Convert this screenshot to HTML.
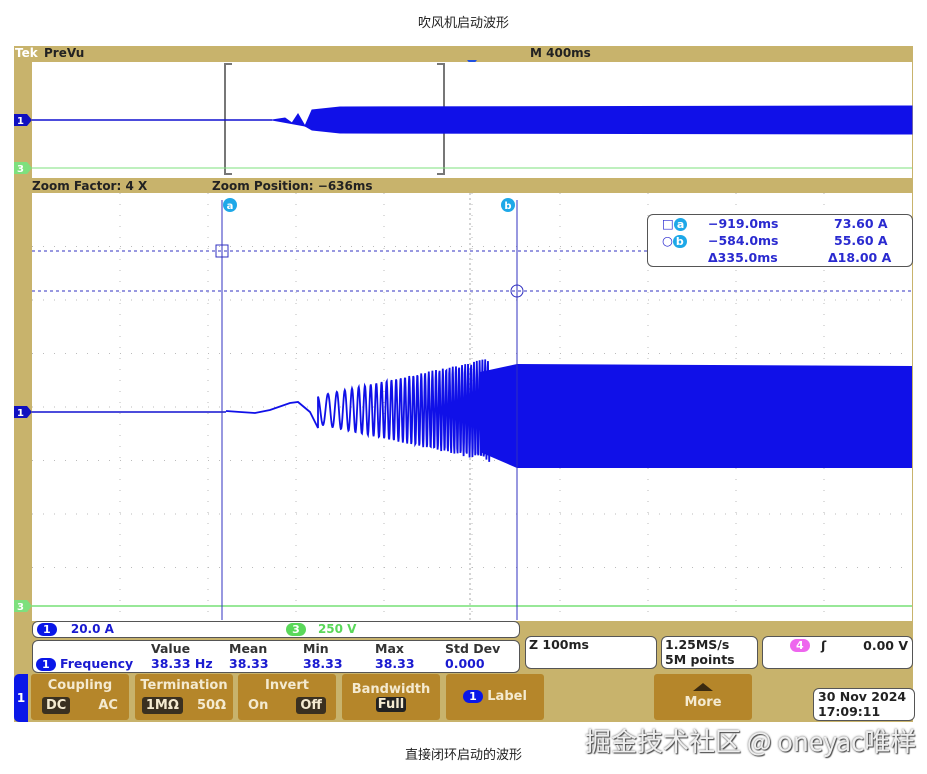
<!DOCTYPE html>
<html><head><meta charset="utf-8"><style>
body{margin:0;width:927px;height:774px;background:#fff;position:relative;overflow:hidden;font-family:"DejaVu Sans","Liberation Sans",sans-serif}
.abs{position:absolute}
.cap{position:absolute;font:13px "Liberation Sans","Noto Sans CJK SC",sans-serif;color:#222;width:927px;text-align:center}
.gold{background:#c8b36c}
.t{font-size:12px;font-weight:bold;color:#222;position:absolute;white-space:nowrap}
.box{position:absolute;background:#fff;border:1px solid #555;border-radius:6px}
.btn{position:absolute;top:674px;height:46px;background:#b5862a;border-radius:3px;color:#f4ead0;font-size:13px;font-weight:bold;text-align:center}
.sel{background:#3a3020;border-radius:3px;padding:1px 4px}
.blue{color:#1a1ad0}
.pill{display:inline-block;background:#0a17e8;color:#fff;border-radius:8px;padding:0 6px;font-size:11px;line-height:13px}
</style></head><body>
<div class="cap" style="top:12px">吹风机启动波形</div>
<div class="cap" style="top:744px">直接闭环启动的波形</div>
<div class="abs gold" style="left:14px;top:46px;width:899px;height:676px"></div>
<div class="t" style="left:15px;top:46px;color:#fff">Tek</div>
<div class="t" style="left:44px;top:46px">PreVu</div>
<div class="t" style="left:530px;top:46px">M 400ms</div>
<div class="abs" style="left:467px;top:60px;width:0;height:0;border:5px solid transparent;border-top:6px solid #2050e0"></div>
<div class="t" style="left:32px;top:179px">Zoom Factor: 4 X</div>
<div class="t" style="left:212px;top:179px">Zoom Position: −636ms</div>
<svg class="abs" style="left:0;top:0" width="927" height="774" id="sv">
<rect x="32" y="62" width="880" height="116" fill="#fff"/>
<rect x="32" y="193" width="880" height="428" fill="#fff"/>
<g id="grid"></g>
<path d="M232 64h-7v110h7M437 64h7v110h-7" fill="none" stroke="#777" stroke-width="2"/>
<line x1="32" y1="168" x2="912" y2="168" stroke="#7ee07e"/>
<line x1="32" y1="120" x2="272" y2="120" stroke="#1010d0" stroke-width="1.5"/>
<path id="top" fill="#1010e8" stroke="#1010e8"/>
<line x1="32" y1="606" x2="912" y2="606" stroke="#30d030"/>
<line x1="32" y1="412" x2="226" y2="412" stroke="#1010d0" stroke-width="1.5"/>
<path id="chirp" fill="none" stroke="#1010e8" stroke-width="1.8"/>
<path id="env" fill="#1010e8"/>
<line x1="222" y1="200" x2="222" y2="620" stroke="#3030c0"/>
<line x1="517" y1="200" x2="517" y2="620" stroke="#3030c0"/>
<line x1="32" y1="251" x2="912" y2="251" stroke="#3030c0" stroke-dasharray="3,3"/>
<line x1="32" y1="291" x2="912" y2="291" stroke="#3030c0" stroke-dasharray="3,3"/>
<rect x="216" y="245" width="12" height="12" fill="none" stroke="#3030c0"/>
<circle cx="517" cy="291" r="6" fill="none" stroke="#3030c0"/>
<circle cx="230" cy="205" r="7" fill="#1ea8e8"/><text x="230" y="209" fill="#fff" font-size="10" font-weight="bold" text-anchor="middle">a</text>
<circle cx="508" cy="205" r="7" fill="#1ea8e8"/><text x="508" y="209" fill="#fff" font-size="10" font-weight="bold" text-anchor="middle">b</text>
<path d="M14 114h13l5 6-5 6h-13z" fill="#1010c0"/><text x="17" y="124" fill="#fff" font-size="10" font-weight="bold">1</text>
<path d="M14 406h13l5 6-5 6h-13z" fill="#1010c0"/><text x="17" y="416" fill="#fff" font-size="10" font-weight="bold">1</text>
<path d="M14 162h13l5 6-5 6h-13z" fill="#7ee07e"/><text x="17" y="172" fill="#fff" font-size="10" font-weight="bold">3</text>
<path d="M14 600h13l5 6-5 6h-13z" fill="#7ee07e"/><text x="17" y="610" fill="#fff" font-size="10" font-weight="bold">3</text>
</svg>
<div class="box" style="left:647px;top:214px;width:264px;height:51px;font-size:12.5px;font-weight:bold;color:#2a2ad0;line-height:16px">
<div class="abs" style="left:14px;top:1px">□<span class="pill" style="background:#1ea8e8;padding:0 3px">a</span></div>
<div class="abs" style="left:14px;top:18px">○<span class="pill" style="background:#1ea8e8;padding:0 3px">b</span></div>
<div class="abs" style="left:60px;top:1px">−919.0ms</div><div class="abs" style="left:60px;top:18px">−584.0ms</div><div class="abs" style="left:60px;top:35px">Δ335.0ms</div>
<div class="abs" style="left:186px;top:1px">73.60 A</div><div class="abs" style="left:186px;top:18px">55.60 A</div><div class="abs" style="left:180px;top:35px">Δ18.00 A</div>
</div>
<div class="box" style="left:32px;top:621px;width:486px;height:15px;font-size:12px;font-weight:bold;line-height:15px">
<span class="pill" style="margin-left:4px">1</span> <span class="blue" style="margin-left:10px">20.0 A</span>
<span class="pill" style="background:#5ad85a;margin-left:168px">3</span> <span style="color:#5ad85a;margin-left:8px">250 V</span></div>
<div class="box" style="left:32px;top:640px;width:486px;height:31px;font-size:12.5px;font-weight:bold;color:#333">
<div class="abs" style="left:118px;top:0">Value</div><div class="abs" style="left:196px;top:0">Mean</div><div class="abs" style="left:270px;top:0">Min</div><div class="abs" style="left:342px;top:0">Max</div><div class="abs" style="left:412px;top:0">Std Dev</div>
<div class="abs blue" style="left:3px;top:15px"><span class="pill">1</span> Frequency</div>
<div class="abs blue" style="left:118px;top:15px">38.33 Hz</div><div class="abs blue" style="left:196px;top:15px">38.33</div><div class="abs blue" style="left:270px;top:15px">38.33</div><div class="abs blue" style="left:342px;top:15px">38.33</div><div class="abs blue" style="left:412px;top:15px">0.000</div></div>
<div class="box" style="left:525px;top:636px;width:127px;height:31px;font-size:12.5px;font-weight:bold;padding-left:3px;color:#222">Z 100ms</div>
<div class="box" style="left:661px;top:636px;width:92px;height:31px;font-size:12.5px;font-weight:bold;padding-left:3px;color:#222;line-height:15px">1.25MS/s<br>5M points</div>
<div class="box" style="left:762px;top:636px;width:149px;height:31px;font-size:12.5px;font-weight:bold;color:#222"><span class="pill" style="background:#ee66ee;position:absolute;left:27px;top:2px">4</span><span class="abs" style="left:58px;top:1px">ʃ</span><span class="abs" style="right:4px;top:1px">0.00 V</span></div>
<div class="abs" style="left:14px;top:674px;width:14px;height:48px;background:#0a17e8;border-radius:5px 0 0 5px;color:#fff;font-size:12px;font-weight:bold;text-align:center;line-height:48px">1</div>
<div class="btn" style="left:31px;width:98px"><div style="margin-top:4px">Coupling</div><div style="margin-top:5px"><span class="sel">DC</span><span style="margin-left:28px">AC</span></div></div>
<div class="btn" style="left:135px;width:98px"><div style="margin-top:4px">Termination</div><div style="margin-top:5px"><span class="sel">1MΩ</span><span style="margin-left:14px">50Ω</span></div></div>
<div class="btn" style="left:238px;width:98px"><div style="margin-top:4px">Invert</div><div style="margin-top:5px"><span>On</span><span class="sel" style="margin-left:28px">Off</span></div></div>
<div class="btn" style="left:342px;width:98px"><div style="margin-top:8px">Bandwidth</div><div><span class="sel" style="padding:0 2px;background:#222">Full</span></div></div>
<div class="btn" style="left:446px;width:98px;line-height:46px"><span class="pill">1</span> Label</div>
<div class="btn" style="left:654px;width:98px"><div style="width:0;height:0;margin:9px auto 0;border:10px solid transparent;border-bottom:8px solid #3a2a10;border-top:0"></div><div style="margin-top:4px">More</div></div>
<div class="box" style="left:813px;top:688px;width:96px;height:31px;font-size:12.5px;font-weight:bold;color:#222;padding-left:4px;line-height:15px">30 Nov 2024<br>17:09:11</div>
<div class="abs" style="left:585px;top:722px;font:26px 'Noto Sans CJK SC',sans-serif;color:#eee;text-shadow:0 0 2px #555,1px 1px 1px #444;white-space:nowrap">掘金技术社区 @ oneyac唯样</div>
<script>
var g='',i;
for(i=1;i<10;i++){var x=32+i*88;g+='<line x1="'+x+'" y1="193" x2="'+x+'" y2="621" stroke="#bbb" stroke-dasharray="1,10"/>';}
for(i=1;i<8;i++){var y=193+i*53.5;g+='<line x1="32" y1="'+y+'" x2="912" y2="'+y+'" stroke="#bbb" stroke-dasharray="1,10"/>';}
g+='<line x1="470" y1="193" x2="470" y2="621" stroke="#aaa" stroke-dasharray="2,3"/>';
document.getElementById('grid').innerHTML=g;
var d='M226 411 L240 412 L255 413 L270 410 L290 403 L298 402 L310 412 L318 428',ph=0,x;
for(x=318;x<=490;x+=0.4){var f=(x-318)/172;ph+=0.4*(0.55+f*1.8);var a=14+f*38;d+=' L'+x.toFixed(1)+' '+(410+a*Math.sin(ph-1.5)).toFixed(1);}
document.getElementById('chirp').setAttribute('d',d);
document.getElementById('env').setAttribute('d','M480 372 L517 364 L912 366 L912 468 L517 468 L480 452 Z');
var t='M272 120 L285 118 L292 123 L298 114 L305 126 L312 110 L340 107 L912 106 L912 134 L340 133 L312 130 L305 126 Z';
document.getElementById('top').setAttribute('d',t);
</script>
</body></html>
